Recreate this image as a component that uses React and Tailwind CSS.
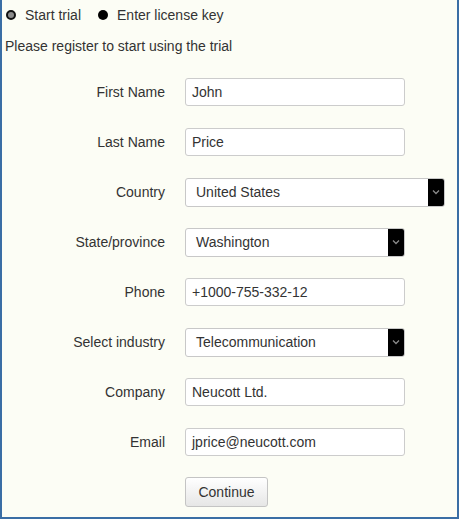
import React from "react";

const fields = [
  { label: "First Name", value: "John", type: "input" },
  { label: "Last Name", value: "Price", type: "input" },
  { label: "Country", value: "United States", type: "select", wide: true },
  { label: "State/province", value: "Washington", type: "select" },
  { label: "Phone", value: "+1000-755-332-12", type: "input" },
  { label: "Select industry", value: "Telecommunication", type: "select" },
  { label: "Company", value: "Neucott Ltd.", type: "input" },
  { label: "Email", value: "jprice@neucott.com", type: "input" },
];

const Chevron = () => (
  <svg width="8" height="6" viewBox="0 0 8 6">
    <path d="M1 1.5 L4 4.5 L7 1.5" fill="none" stroke="#8a8a8a" strokeWidth="1.3" />
  </svg>
);

const Field = ({ field }) => {
  const width = field.wide ? "w-[260px]" : "w-[220px]";
  if (field.type === "select") {
    return (
      <div className={`${width} h-[29px] flex items-stretch bg-white border border-[#c8c8c8] rounded-[3px] overflow-hidden`}>
        <div className="flex-1 flex items-center pl-[10px] text-[#333]">{field.value}</div>
        <div className="w-[16px] bg-black flex items-center justify-center">
          <Chevron />
        </div>
      </div>
    );
  }
  return (
    <div className={`${width} h-[28px] flex items-center bg-white border border-[#cccccc] rounded-[3px] pl-[6px] text-[#333]`}>
      {field.value}
    </div>
  );
};

export default function App() {
  return (
    <div
      className="w-[459px] h-[519px] bg-[#fcfdf5] border-l-2 border-r-2 border-b-2 border-[#3a6ea5] text-[14px] text-[#333]"
      style={{ fontFamily: '"Liberation Sans", Arial, sans-serif' }}
    >
      {/* radios */}
      <div className="h-[30px] flex items-center pl-[4px]">
        <span className="w-[10px] h-[10px] rounded-full border-[2px] border-[#111] bg-[#8c8c8c]" />
        <span className="ml-[9px]">Start trial</span>
        <span className="ml-[17px] w-[10px] h-[10px] rounded-full bg-black" />
        <span className="ml-[9px]">Enter license key</span>
      </div>

      <div className="mt-[6px] h-[20px] flex items-center pl-[3px]">
        Please register to start using the trial
      </div>

      <div className="mt-[22px] flex flex-col gap-[22px]">
        {fields.map((f) => (
          <div key={f.label} className="flex items-center h-[28px]">
            <div className="w-[163px] text-right">{f.label}</div>
            <div className="ml-[20px]">
              <Field field={f} />
            </div>
          </div>
        ))}
      </div>

      <div className="mt-[21px] pl-[183px]">
        <button className="w-[83px] h-[30px] border border-[#c4c4c4] rounded-[3px] bg-gradient-to-b from-white to-[#e6e6e6] text-[#333] text-[14px]">
          Continue
        </button>
      </div>
    </div>
  );
}
